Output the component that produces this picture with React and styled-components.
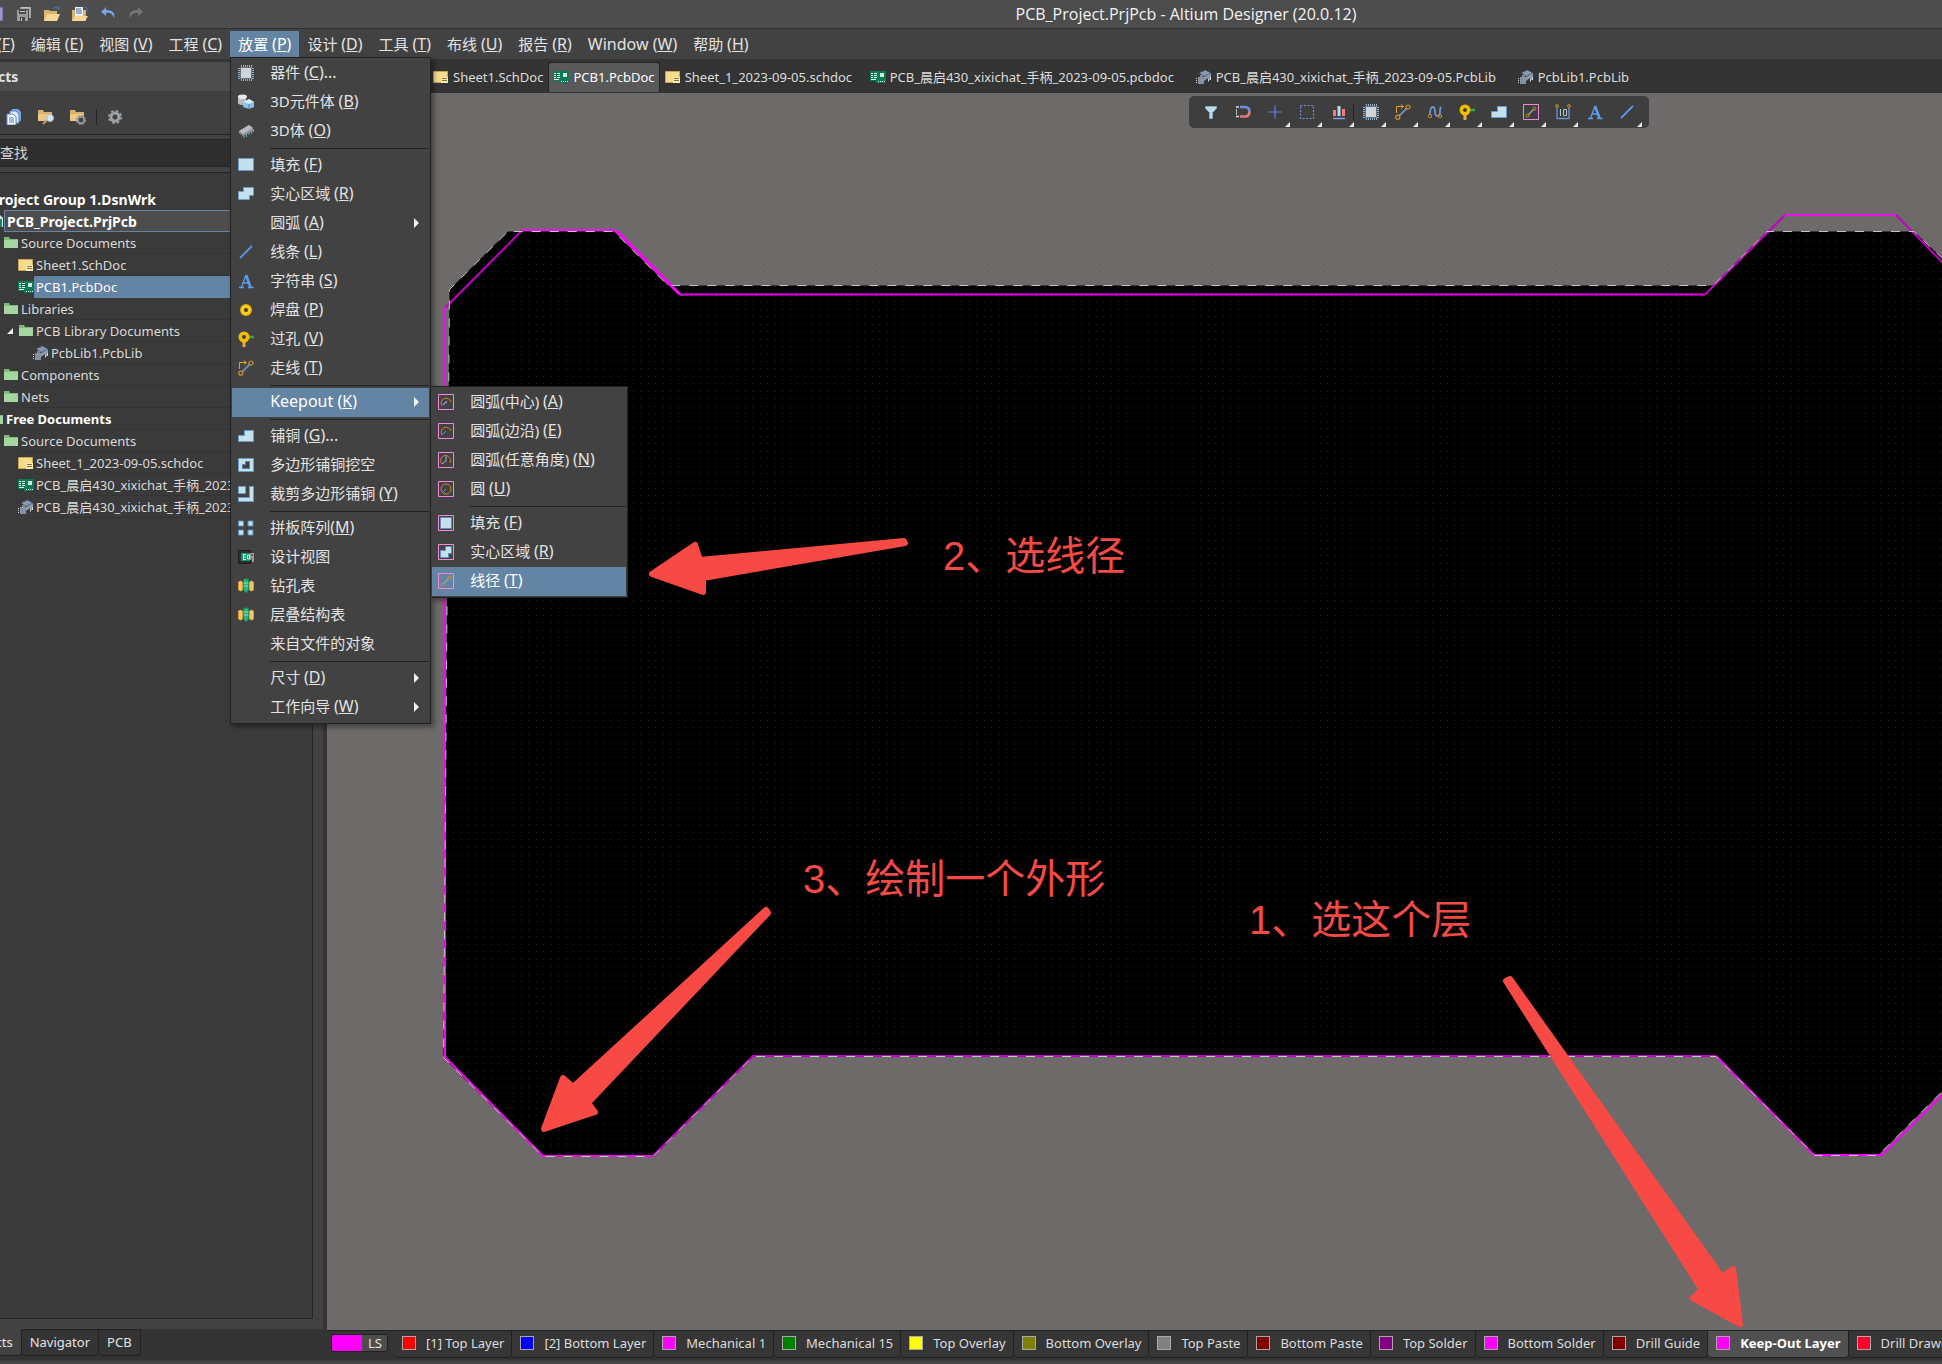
import React, { useState } from "react";
import styled, { createGlobalStyle } from "styled-components";

const GlobalStyle = createGlobalStyle`
  * {
    box-sizing: border-box;
  }
  html, body, #root {
    height: 100%;
  }
  body {
    margin: 0;
    overflow: hidden;
    background: #343434;
    color: #e3e3e3;
    font-family: "Noto Sans", "Noto Sans CJK SC", sans-serif;
    font-size: 13px;
  }
  button, input {
    font: inherit;
    color: inherit;
  }
  button {
    border: none;
    background: none;
    padding: 0;
  }
  ul {
    list-style: none;
    margin: 0;
    padding: 0;
  }
  svg {
    display: block;
    flex: none;
  }
`;

const Window = styled.div`
  display: flex;
  flex-direction: column;
  height: 100vh;
`;

const TitleBar = styled.header`
  display: flex;
  align-items: center;
  height: 29px;
  background: #4d4d4d;
  border-bottom: 1px solid #2f2f2f;
`;

const QuickAccess = styled.div`
  display: flex;
  gap: 12px;
  margin-left: -12px;
`;

const WindowTitle = styled.h1`
  flex: 1;
  margin: 0;
  padding-left: 286px;
  text-align: center;
  font-family: "Open Sans", "Noto Sans", sans-serif;
  font-size: 16px;
  line-height: 20px;
  font-weight: 400;
  color: #f2f2f2;
`;

const MenuBar = styled.nav`
  display: flex;
  align-items: center;
  height: 30px;
  padding-bottom: 1px;
  margin-left: -45px;
  background: #424242;
`;

const MenuSlot = styled.div`
  position: relative;
`;

const MenuTitle = styled.button`
  display: block;
  height: 26px;
  padding: 0 8px;
  font-size: ${(props) => (props.$latin ? "16px" : "15px")};
  line-height: 24px;
  white-space: nowrap;
  background: ${(props) => (props.$open ? "#6484a4" : "none")};
  color: ${(props) => (props.$open ? "#fff" : "#e3e3e3")};
`;

const Hotkey = styled.span`
  font-size: 16px;
`;

const Popup = styled.ul`
  position: absolute;
  z-index: 10;
  top: ${(props) => (props.$sub ? "-2px" : "100%")};
  left: ${(props) => (props.$sub ? "calc(100% + 1px)" : "0")};
  width: ${(props) => (props.$sub ? "198px" : "201px")};
  padding: 1px;
  background: #424242;
  border: 1px solid #222;
  box-shadow: 3px 3px 5px rgba(0, 0, 0, 0.4);
`;

const PopupItem = styled.li`
  position: relative;
`;

const PopupButton = styled.button`
  display: flex;
  align-items: center;
  width: 100%;
  height: 29px;
  padding: 0 10px 0 6px;
  gap: 16px;
  font-size: ${(props) => (props.$latin ? "16px" : "15px")};
  text-align: left;
  white-space: nowrap;
  background: ${(props) => (props.$active ? "#6484a4" : "none")};
  color: ${(props) => (props.$active ? "#fff" : "#e3e3e3")};
`;

const PopupLabel = styled.span`
  flex: 1;
  padding-bottom: 2px;
  line-height: 24px;
`;

const Divider = styled.li`
  height: 5px;
  margin-left: 38px;
  border-top: 2px solid transparent;

  &::after {
    content: "";
    display: block;
    height: 1px;
    background: #222;
  }
`;

const Workspace = styled.div`
  display: flex;
  flex: 1;
  min-height: 0;
`;

const Sidebar = styled.aside`
  display: flex;
  flex-direction: column;
  width: 327px;
  padding-top: 3px;
`;

const Panel = styled.section`
  display: flex;
  flex: 1;
  flex-direction: column;
  min-height: 0;
  margin-right: 4px;
  background: #424242;
`;

const PanelTitle = styled.h2`
  height: 29px;
  margin: 0 0 0 -38px;
  background: #4d4d4d;
  font-size: 14px;
  line-height: 29px;
  font-weight: 700;
`;

const PanelTools = styled.div`
  display: flex;
  align-items: center;
  height: 44px;
  padding: 8px 6px 0;
  gap: 16px;
  background: #404040;
  border-bottom: 1px solid #252525;
`;

const ToolDivider = styled.span`
  width: 1px;
  height: 16px;
  margin: 0 -6px;
  background: #222;
`;

const SearchBox = styled.input`
  height: 28px;
  margin: 4px 10px 5px 0;
  padding: 0 0 2px;
  background: #2e2e2e;
  border: 1px solid #252525;
  border-left: none;
  border-radius: 0;
  font-size: 14px;

  &::placeholder {
    color: #d6d6d6;
    opacity: 1;
  }
`;

const TreeBox = styled.div`
  flex: 1;
  margin: 0 10px 10px 0;
  padding-top: 15px;
  overflow: hidden;
  background: #3a3a3a;
  border: 1px solid #252525;
  border-left: none;
`;

const Tree = styled.ul`
  margin-left: -12px;
`;

const TreeRow = styled.li`
  position: relative;
  display: flex;
  align-items: center;
  height: 22px;
  padding-left: ${(props) => props.$level * 15}px;
`;

const TreeLabel = styled.button`
  flex: 1;
  height: 22px;
  padding: 0 2px;
  overflow: hidden;
  text-align: left;
  white-space: nowrap;
  font-size: ${(props) => (props.$project ? "14px" : "13px")};
  line-height: 19px;
  font-weight: ${(props) => (props.$bold ? 700 : 400)};
  color: ${(props) => (props.$bold || props.$selected ? "#fff" : "#d9d9d9")};
  background: ${(props) => (props.$selected ? "#6484a4" : props.$current ? "#4d4d4d" : "none")};
  border: 1px solid ${(props) => (props.$current || props.$selected ? "#6484a4" : "transparent")};
  border-width: ${(props) => (props.$current ? "1px" : "1px 0")};
  ${(props) => !props.$project && !props.$selected && "border-bottom-color: #333;"}
`;

const Twisty = styled.span`
  position: absolute;
  left: 19px;
  top: 8px;
  border-left: 6px solid transparent;
  border-bottom: 6px solid #f0f0f0;
`;

const PanelTabs = styled.div`
  display: flex;
  height: 35px;
  margin-left: -44px;
`;

const PanelTab = styled.button`
  height: 27px;
  padding: 0 8px 2px;
  font-size: 13px;
  background: ${(props) => (props.$active ? "#424242" : "#343434")};
  border: 1px solid #222;
  border-left-width: 0;
  border-top-color: ${(props) => (props.$active ? "#424242" : "#222")};
  border-radius: 0 0 4px 4px;
`;

const Editor = styled.main`
  display: flex;
  flex: 1;
  flex-direction: column;
  min-width: 0;
`;

const DocTabs = styled.div`
  display: flex;
  align-items: flex-end;
  height: 34px;
  padding: 0 0 1px 101px;
`;

const DocTab = styled.button`
  display: flex;
  align-items: center;
  height: 30px;
  min-width: ${(props) => props.$width}px;
  padding: 0 4px 2px;
  gap: 4px;
  font-size: 13px;
  white-space: nowrap;
  color: ${(props) => (props.$active ? "#fff" : "#dcdcdc")};
  background: ${(props) => (props.$active ? "#595959" : "none")};
  border: 1px solid ${(props) => (props.$active ? "#232323" : "transparent")};
  border-bottom: none;
  border-radius: 4px 4px 0 0;
`;

const Canvas = styled.div`
  position: relative;
  flex: 1;
  min-height: 0;
  overflow: hidden;
  background: #6e6a69;
`;

const Board = styled.svg`
  width: 100%;
  height: 100%;
`;

const Note = styled.text`
  fill: #f74a45;
  font-family: "Liberation Sans", "Noto Sans CJK SC", sans-serif;
  font-size: 40px;
  font-weight: 400;
`;

const ActiveBar = styled.div`
  position: absolute;
  top: 3px;
  left: 862px;
  display: flex;
  height: 32px;
  padding: 0 6px;
  background: #3e3e3e;
  border-radius: 5px;
`;

const ActiveTool = styled.button`
  position: relative;
  display: flex;
  align-items: center;
  justify-content: center;
  width: 32px;
  border-right: 1px solid transparent;

  &::before {
    content: "";
    position: absolute;
    right: 0;
    top: 8px;
    display: ${(props) => (props.$split ? "block" : "none")};
    width: 1px;
    height: 16px;
    background: #222;
  }

  &::after {
    content: "";
    position: absolute;
    right: 0;
    bottom: 1px;
    display: ${(props) => (props.$more ? "block" : "none")};
    border-left: 5px solid transparent;
    border-bottom: 5px solid #e8e8e8;
  }
`;

const LayerTabs = styled.div`
  display: flex;
  height: 34px;
  padding-left: 4px;
  border-top: 1px solid #222;
  overflow: hidden;
`;

const LayerSet = styled.button`
  display: flex;
  flex: none;
  height: 18px;
  margin: 3px 6px 0 0;
  border: 1px solid #222;
  border-radius: 3px;
  overflow: hidden;
  background: #4d4d4d;
  font-size: 13px;
  line-height: 16px;
`;

const LayerSetColor = styled.span`
  width: 30px;
  height: 100%;
  margin-right: 1px;
  background: #ff00ff;
`;

const LayerSetName = styled.span`
  width: 24px;
  text-align: center;
`;

const LayerTab = styled.button`
  display: flex;
  align-items: center;
  flex: none;
  height: 27px;
  padding: 0 7px 2px 8px;
  gap: 10px;
  font-size: 13px;
  white-space: nowrap;
  font-weight: ${(props) => (props.$active ? 700 : 400)};
  color: ${(props) => (props.$active ? "#fff" : "#dcdcdc")};
  background: ${(props) => (props.$active ? "#505050" : "#363636")};
  border: 1px solid #222;
  border-width: 0 1px 1px 0;
  border-radius: 0 0 4px 4px;
`;

const Swatch = styled.span`
  width: 14px;
  height: 14px;
  background: ${(props) => props.$color};
  border: 1px solid #a8a8a8;
`;

const StatusStrip = styled.footer`
  height: 4px;
  margin-top: -4px;
  background: #454545;
  border-top: 1px solid #3c3c3c;
`;

const ICONS = {
  save: (
    <path d="M1 1h14v14H1z" fill="#9d9ac8" stroke="#55558a" />
  ),
  saveAll: (
    <>
      <path d="M4 1h11v11h-2V3H4z" fill="#a9a9a9" />
      <path d="M1 4h11v11H1z" fill="#9b9b9b" />
      <path d="M3 4h7v4H3zM4 11h5v4H4z" fill="#4b4b4b" />
      <path d="M4 5h5v1H4zM5 12h1v3H5zM6 1h6v1H6z" fill="#c8c8c8" />
    </>
  ),
  folderOpen: (
    <>
      <path d="M0 4h5l1 1h7v10H0z" fill="#d9b36a" />
      <path d="M3 8h13l-3 7H0z" fill="#f6d694" />
      <path d="M9 3q3-3 6-1M15 0v3h-3" fill="none" stroke="#4577ad" />
    </>
  ),
  folderDoc: (
    <>
      <path d="M0 4h14v11H0z" fill="#d9b36a" />
      <path d="M3 1h8v9H3z" fill="#e8eff8" />
      <path d="M4 3h5M4 5h6M4 7h6" stroke="#4b6ea8" />
      <path d="M3 10h13l-3 5H0z" fill="#f6d694" />
      <path d="M12 1l3 1v3" fill="none" stroke="#4577ad" />
    </>
  ),
  undo: <path d="M6 1L1 6l5 4V7q6-1 8 5 2-8-8-8z" fill="#7ba4e8" />,
  redo: <path d="M10 1l5 5-5 4V7Q4 6 2 12 0 4 10 4z" fill="#777" />,
  docs: (
    <>
      <path d="M6 0h6l3 3v9H6z" fill="#7ea9dc" />
      <path d="M4 2h6l3 3v9H4z" fill="#dbe8f7" stroke="#5d86c2" />
      <path d="M1 5h6l3 3v8H1z" fill="#fff" stroke="#5d86c2" />
      <path d="M3 9h5M3 11h5M3 13h5" stroke="#4577c9" />
    </>
  ),
  folderSearch: (
    <>
      <path d="M0 1h5l1 2h8v9H0z" fill="#d9b36a" />
      <path d="M0 5h13v7H0z" fill="#ecc987" />
      <path d="M9 11l-4 4" stroke="#c79556" strokeWidth="2" />
      <circle cx="12" cy="9" r="3.5" fill="#d5e6f5" stroke="#a6bccf" />
    </>
  ),
  folderGear: (
    <>
      <path d="M0 1h5l1 2h8v9H0z" fill="#d9b36a" />
      <path d="M0 5h13v7H0z" fill="#ecc987" />
      <circle cx="11" cy="11" r="3.3" fill="#404040" stroke="#8f989c" strokeWidth="2" />
      <circle cx="11" cy="11" r="4.6" fill="none" stroke="#8f989c" strokeDasharray="2 1.6" />
    </>
  ),
  gear: (
    <>
      <circle cx="8" cy="8" r="4" fill="none" stroke="#9ba3a7" strokeWidth="3" />
      <circle cx="8" cy="8" r="6.2" fill="none" stroke="#9ba3a7" strokeWidth="1.6" strokeDasharray="2.6 2.27" />
    </>
  ),
  chip: (
    <>
      <path d="M3.5 0v16M5.5 0v16M7.5 0v16M9.5 0v16M11.5 0v16M13.5 0v16M0 3.5h16M0 5.5h16M0 7.5h16M0 9.5h16M0 11.5h16M0 13.5h16" stroke="#8fb3cf" />
      <path d="M2.5 2.5h11v11h-11z" fill="#cfd4d8" stroke="#66727c" />
    </>
  ),
  body3d: (
    <>
      <path d="M0 2.5v7q4 3 8 0v-7z" fill="#b9bcc0" />
      <ellipse cx="4.5" cy="2.8" rx="4.5" ry="2.3" fill="#e8e8ea" />
      <path d="M5 8l6-3 5 3v5l-5 2-6-2z" fill="#8cc0e6" />
      <path d="M5 8l6-3 5 3-5 2z" fill="#d5ecfa" />
      <path d="M11 10v5" stroke="#4f85b0" />
    </>
  ),
  chip3d: (
    <>
      <path d="M1 8l10-6 4 3v3L5 13 1 10z" fill="#8c9094" />
      <path d="M1 8l10-6 4 3-10 6z" fill="#b8bbbe" />
      <path d="M6 12v3M8.5 11v3M11 9v3M13.5 8v3M15.5 6v3" stroke="#6fa5b8" />
    </>
  ),
  fill: <path d="M.5 1.5h15v12H.5z" fill="#c3e1ec" stroke="#6c9cc4" />,
  region: <path d="M5.5 1.5h10v8h-4v4H.5v-8h5z" fill="#c3e1ec" stroke="#6c9cc4" />,
  line: <path d="M2 14L14 2" stroke="#5b97e6" strokeWidth="1.8" />,
  text: (
    <>
      <path d="M1 14.500h5M10 14.500h5.500M3.500 14L8 2M5 10h6" fill="none" stroke="#5b9ef0" strokeWidth="1.3" />
      <path d="M8 2l4.500 12" stroke="#5b9ef0" strokeWidth="2.6" />
    </>
  ),
  pad: (
    <>
      <circle cx="8" cy="8" r="4" fill="none" stroke="#ecb400" strokeWidth="4" />
      <circle cx="8" cy="8" r="3.5" fill="none" stroke="#ffd83a" strokeWidth="1.4" />
    </>
  ),
  via: (
    <>
      <path d="M9 6h7" stroke="#3fa53f" strokeWidth="2.5" />
      <path d="M6 9v7" stroke="#efa750" strokeWidth="3" />
      <circle cx="6" cy="6" r="3.7" fill="#3a3a3a" stroke="#f0bd00" strokeWidth="3.6" />
    </>
  ),
  track: (
    <>
      <path d="M1.5 9V2.5H8M6 .5l2.5 2L6 4.5" fill="none" stroke="#e5a11d" />
      <path d="M4 12l7.5-7.5" stroke="#6e89b0" strokeWidth="2" />
      <circle cx="13" cy="3" r="2" fill="none" stroke="#c9922e" strokeWidth="1.2" />
      <circle cx="2.8" cy="13.2" r="2" fill="none" stroke="#c9922e" strokeWidth="1.2" />
    </>
  ),
  polygon: <path d="M6.5 2.5h9v11H.5v-6h6z" fill="#c3e1ec" stroke="#6c9cc4" />,
  cutout: (
    <>
      <path d="M.5 1.5h15v13H.5z" fill="#c3e1ec" stroke="#6c9cc4" />
      <path d="M7.5 4.5h4v7h-7v-4h3z" fill="#3c4248" stroke="#5d7f9c" />
    </>
  ),
  slice: <path d="M.5.5h7v7h-7zM11.5.5h4v15H.5v-4h11z" fill="#c3e1ec" stroke="#6c9cc4" />,
  array: <path d="M.5 1h5v5h-5zM10 1h5v5h-5zM.5 10h5v5h-5zM10 10h5v5h-5z" fill="#c3e1ec" stroke="#5e8fbd" />,
  designView: (
    <>
      <path d="M.5 1.5h12v13H.5z" fill="#303030" stroke="#000" strokeDasharray="1 1" />
      <path d="M3 4h9v8H3z" fill="#0f9a68" />
      <path d="M5 5.500h3M5 8h3M5 10.500h3M5.500 5v6M9.500 6h2v4h-2z" fill="none" stroke="#d9f3e6" />
      <path d="M12 4h4v9h-2v-2h-2z" fill="#999" />
      <path d="M13 6h2M13 10h1" stroke="#333" />
    </>
  ),
  drill: (
    <>
      <path d="M.5 4q2-2 4 0v8q-2 2-4 0zM11.5 4q2-2 4 0v8q-2 2-4 0z" fill="#f1c568" stroke="#d69a34" />
      <path d="M5.5 1.5q2.5-1.5 5 0V12L8 15l-2.5-3z" fill="#2eb27c" stroke="#10875a" />
      <path d="M5.5 5h5M5.5 8h5" stroke="#8be0bd" />
    </>
  ),
  sch: (
    <>
      <path d="M.5 2.5h14v11H.5z" fill="#f4dc8a" stroke="#c9a552" />
      <path d="M8 8h7v6H8z" fill="#f9ecb9" />
      <path d="M9 9.5h5M9 11.5h5" stroke="#8d7335" />
    </>
  ),
  pcb: (
    <>
      <path d="M0 2h16v10h-1v2H6v-2H0z" fill="#0a7a54" />
      <path d="M1 4.5h2M4 4.5h3M1 6.5h2M4 6.5h3M1 8.5h2M4 8.5h3M1 10.5h5M8 12.5h1M10 12.5h1M12 12.5h1M14 12.5h1" stroke="#dff5ea" />
      <path d="M10 4h4v4h-4z" fill="#cfe9df" />
    </>
  ),
  lib: (
    <>
      <path d="M8 8l7-4v6l-3 2V9L8 12z" fill="#8f9aa8" />
      <path d="M3 4l6-3 6 3-6 4z" fill="#5f7690" />
      <path d="M5 3l5 3M8 2l5 3M5 5l6-3M7 6l6-3" stroke="#a8b8c8" strokeWidth="0.7" />
      <path d="M2 8h6v7H2z" fill="#8491a3" />
      <path d="M0 9.500h1M0 11.500h1M0 13.500h1M4 7h3M12.500 10v2.500M14.500 8v3" stroke="#d3d9e0" />
    </>
  ),
  folder: (
    <>
      <path d="M1 2h5l1 2h8v9H1z" fill="#7fba7c" />
      <path d="M1 5h14v8H1z" fill="#a5d6a0" />
    </>
  ),
  project: (
    <>
      <path d="M5 2h7l3 3v9H5z" fill="#e6ecf2" />
      <path d="M8 6h6v8H8z" fill="#0a8a5e" />
    </>
  ),
  filter: <path d="M2.5 2.5h11v2l-4 4v6h-3v-6l-4-4z" fill="#b8dcec" stroke="#7fa9c4" />,
  magnet: (
    <>
      <path d="M5 3h5q4.5 0 4.5 5" fill="none" stroke="#6f8ede" strokeWidth="2.6" />
      <path d="M14.5 7.5q0 5-4.5 5H5" fill="none" stroke="#e3787d" strokeWidth="2.6" />
      <path d="M1 3h3M1 12.5h3M1 6h1M1 8h1M1 10h1" stroke="#d9dde6" strokeWidth="1.5" />
    </>
  ),
  cross: <path d="M8 1.5v13M1.5 8h13" stroke="#5d84dc" strokeWidth="1.2" />,
  select: <path d="M1.5 1.5h13v13h-13z" fill="none" stroke="#6f8ede" strokeWidth="1.2" strokeDasharray="2 1.5" />,
  align: (
    <>
      <path d="M2 14.5h12" stroke="#7fa2e8" strokeWidth="1.5" />
      <path d="M2 6h3v6H2zM11 5h3v7h-3z" fill="#ef7d80" />
      <path d="M6.500 2h3v10h-3z" fill="#b8dcec" />
    </>
  ),
  tune: (
    <>
      <path d="M3 11Q3 3 5.5 3T8 7.5 10.5 12 13 8t1-5" fill="none" stroke="#6f91cf" strokeWidth="1.8" />
      <circle cx="3" cy="12" r="1.7" fill="none" stroke="#c9922e" />
      <circle cx="13" cy="12" r="1.7" fill="none" stroke="#c9922e" />
    </>
  ),
  dimension: (
    <>
      <path d="M2 3v11.5h12V3" fill="none" stroke="#6f91cf" strokeWidth="1.3" />
      <circle cx="2" cy="2" r="1.4" fill="none" stroke="#c9922e" />
      <circle cx="14" cy="2" r="1.4" fill="none" stroke="#c9922e" />
      <path d="M5.500 5v7M8.500 5.500h3v6h-3z" fill="none" stroke="#b9c3d3" />
    </>
  ),
};

// keepout variants share the pink frame
const FRAMED = {
  koCenter: (
    <>
      <path d="M4 12A5 5 0 1 1 13 8" fill="none" stroke="#c9822e" />
      <path d="M5 11l3-3" stroke="#6f91cf" strokeWidth="1.4" />
      <path d="M7.5 7.5h1.5v1.5H7.5z" fill="#8bb3ec" />
    </>
  ),
  koEdge: (
    <>
      <path d="M4 12A5 5 0 1 1 13 8" fill="none" stroke="#c9822e" />
      <path d="M4 12l4-4" stroke="#6f91cf" />
    </>
  ),
  koAngle: (
    <>
      <path d="M4 12A5 5 0 1 1 12 11" fill="none" stroke="#c9822e" />
      <path d="M4 12l4-3V4" fill="none" stroke="#8bb3ec" />
    </>
  ),
  koCircle: (
    <>
      <circle cx="8" cy="8" r="5" fill="none" stroke="#c9822e" />
      <path d="M5 11l3-3" stroke="#6f91cf" />
    </>
  ),
  koFill: <path d="M2.5 2.5h11v11h-11z" fill="#c3e1ec" stroke="#5e8fbd" />,
  koRegion: <path d="M7.5 2.5h6v7h-3v4h-8v-7h5z" fill="#c3e1ec" stroke="#5e8fbd" />,
  koTrack: (
    <>
      <path d="M5.5 10.5l5-5" stroke="#8f9fb4" strokeWidth="1.5" />
      <circle cx="11.5" cy="4.5" r="1.5" fill="none" stroke="#c9922e" />
      <circle cx="4.5" cy="11.5" r="1.5" fill="none" stroke="#c9922e" />
    </>
  ),
};

const Icon = ({ name }) => (
  <svg width="16" height="16" viewBox="0 0 16 16" aria-hidden="true">
    {FRAMED[name] && <path d="M.5.5h15v15H.5z" fill="none" stroke="#f08ad8" />}
    {FRAMED[name] || ICONS[name]}
  </svg>
);

const menus = [
  ["文件", "F"],
  ["编辑", "E"],
  ["视图", "V"],
  ["工程", "C"],
  ["放置", "P"],
  ["设计", "D"],
  ["工具", "T"],
  ["布线", "U"],
  ["报告", "R"],
  ["Window", "W", true],
  ["帮助", "H"],
];

const keepoutItems = [
  { label: "圆弧(中心) ", hotkey: "A", icon: "koCenter" },
  { label: "圆弧(边沿) ", hotkey: "E", icon: "koEdge" },
  { label: "圆弧(任意角度) ", hotkey: "N", icon: "koAngle" },
  { label: "圆 ", hotkey: "U", icon: "koCircle" },
  null,
  { label: "填充 ", hotkey: "F", icon: "koFill" },
  { label: "实心区域 ", hotkey: "R", icon: "koRegion" },
  { label: "线径 ", hotkey: "T", icon: "koTrack", active: true },
];

const placeItems = [
  { label: "器件 ", hotkey: "C", icon: "chip", tail: "..." },
  { label: "3D元件体 ", hotkey: "B", icon: "body3d" },
  { label: "3D体 ", hotkey: "O", icon: "chip3d" },
  null,
  { label: "填充 ", hotkey: "F", icon: "fill" },
  { label: "实心区域 ", hotkey: "R", icon: "region" },
  { label: "圆弧 ", hotkey: "A", arrow: true },
  { label: "线条 ", hotkey: "L", icon: "line" },
  { label: "字符串 ", hotkey: "S", icon: "text" },
  { label: "焊盘 ", hotkey: "P", icon: "pad" },
  { label: "过孔 ", hotkey: "V", icon: "via" },
  { label: "走线 ", hotkey: "T", icon: "track" },
  null,
  { label: "Keepout ", hotkey: "K", latin: true, arrow: true, active: true, items: keepoutItems },
  null,
  { label: "铺铜 ", hotkey: "G", icon: "polygon", tail: "..." },
  { label: "多边形铺铜挖空", icon: "cutout" },
  { label: "裁剪多边形铺铜 ", hotkey: "Y", icon: "slice" },
  null,
  { label: "拼板阵列", hotkey: "M", icon: "array" },
  { label: "设计视图", icon: "designView" },
  { label: "钻孔表", icon: "drill" },
  { label: "层叠结构表", icon: "drill" },
  { label: "来自文件的对象" },
  null,
  { label: "尺寸 ", hotkey: "D", arrow: true },
  { label: "工作向导 ", hotkey: "W", arrow: true },
];

const treeRows = [
  { label: "Source Documents", level: 1, icon: "folder" },
  { label: "Sheet1.SchDoc", level: 2, icon: "sch" },
  { label: "PCB1.PcbDoc", level: 2, icon: "pcb", selected: true },
  { label: "Libraries", level: 1, icon: "folder" },
  { label: "PCB Library Documents", level: 2, icon: "folder", twisty: true },
  { label: "PcbLib1.PcbLib", level: 3, icon: "lib" },
  { label: "Components", level: 1, icon: "folder" },
  { label: "Nets", level: 1, icon: "folder" },
  { label: "Free Documents", level: 0, icon: "folder", bold: true },
  { label: "Source Documents", level: 1, icon: "folder" },
  { label: "Sheet_1_2023-09-05.schdoc", level: 2, icon: "sch" },
  { label: "PCB_晨启430_xixichat_手柄_2023-09-05.pcbdoc", level: 2, icon: "pcb" },
  { label: "PCB_晨启430_xixichat_手柄_2023-09-05.PcbLib", level: 2, icon: "lib" },
];

const docTabs = [
  { label: "Sheet1.SchDoc", icon: "sch", width: 120 },
  { label: "PCB1.PcbDoc", icon: "pcb", width: 111 },
  { label: "Sheet_1_2023-09-05.schdoc", icon: "sch", width: 205 },
  { label: "PCB_晨启430_xixichat_手柄_2023-09-05.pcbdoc", icon: "pcb", width: 326 },
  { label: "PCB_晨启430_xixichat_手柄_2023-09-05.PcbLib", icon: "lib", width: 322 },
  { label: "PcbLib1.PcbLib", icon: "lib", width: 120 },
];

const layers = [
  ["[1] Top Layer", "#ff0000"],
  ["[2] Bottom Layer", "#0000ff"],
  ["Mechanical 1", "#ff00ff"],
  ["Mechanical 15", "#008000"],
  ["Top Overlay", "#ffff00"],
  ["Bottom Overlay", "#808000"],
  ["Top Paste", "#808080"],
  ["Bottom Paste", "#800000"],
  ["Top Solder", "#800080"],
  ["Bottom Solder", "#ff00ff"],
  ["Drill Guide", "#800000"],
  ["Keep-Out Layer", "#ff00ff"],
  ["Drill Drawing", "#ff002a"],
];

const tools = [
  ["filter", "Filter"],
  ["magnet", "Snapping"],
  ["cross", "Move", true],
  ["select", "Select", true],
  ["align", "Align", true],
  ["chip", "Component", true],
  ["track", "Route", true],
  ["tune", "Tuning", true],
  ["via", "Via", true],
  ["polygon", "Polygon", true],
  ["koTrack", "Keepout", true],
  ["dimension", "Dimension", true],
  ["text", "String"],
  ["line", "Line", true],
];

const quickTools = [
  ["save", "Save"],
  ["saveAll", "Save all"],
  ["folderOpen", "Open"],
  ["folderDoc", "Open document"],
  ["undo", "Undo"],
  ["redo", "Redo"],
];

// snap grid, one dot per pixel-aligned grid point
const GRID_STEP = 7.47;
const gridPath = (() => {
  let d = "";
  for (let row = 0; row < 124; row++) {
    const y = 234 + Math.round(row * GRID_STEP);
    for (let col = 0; col < 201; col++) {
      d += `M${446 + Math.round(col * GRID_STEP)} ${y}h1v1h-1z`;
    }
  }
  return d;
})();

const BOARD_EDGE =
  "M1943 259L1914 231.5H1767L1713 285.5H668L614 231.5H508L449.5 289.5L443.5 1057.5L543 1156.5H653L753 1056.5H1716L1815 1155.5H1878L1943 1090.5";

const PopupMenu = ({ items, sub }) => (
  <Popup $sub={sub} role="menu">
    {items.map((item, index) =>
      item ? (
        <PopupItem key={item.label} role="none">
          <PopupButton $active={item.active} $latin={item.latin} role="menuitem">
            <Icon name={item.icon} />
            <PopupLabel>
              {item.label}
              {item.hotkey && (
                <Hotkey>
                  (<u>{item.hotkey}</u>){item.tail}
                </Hotkey>
              )}
            </PopupLabel>
            {item.arrow && (
              <svg width="5" height="10" viewBox="0 0 5 10" aria-hidden="true">
                <path d="M0 0l5 5-5 5z" fill="#f0f0f0" />
              </svg>
            )}
          </PopupButton>
          {item.items && item.active && <PopupMenu items={item.items} sub />}
        </PopupItem>
      ) : (
        <Divider key={index} role="separator" />
      )
    )}
  </Popup>
);

const BoardView = () => (
  <Board viewBox="327 93 1615 1237" preserveAspectRatio="xMinYMin slice">
    <path d={BOARD_EDGE} fill="#000" />
    <path d={gridPath} fill="#8a8a8a" fillOpacity="0.3" shapeRendering="crispEdges" />
    <g fill="none" stroke="#ff00ff" strokeWidth="2">
      <path d="M616 230.5L680 294.5" strokeWidth="3" />
      <path d="M445 308L522 230.5M1705 294.5L1785 215" stroke="#c400c4" />
      <path d="M522 230H616M1785 215H1896" stroke="#f010f0" />
      <path d="M1896 215L1943 263" stroke="#c400c4" />
      <path d="M680 294.5H1705" stroke="#8a008a" strokeWidth="3" />
      <path d="M680 294.5H1705" strokeWidth="1" strokeDasharray="3 2" />
      <path d="M445 307V1057L543 1156H653" />
      <path d="M653 1156L753 1056H1716" stroke="#c400c4" />
      <path d="M1716 1056L1814 1155H1882L1943 1094" />
    </g>
    <path d={BOARD_EDGE} fill="none" stroke="#c4c4c4" strokeDasharray="9 9" />
    <g fill="#f74a45" stroke="#f74a45" strokeWidth="6" strokeLinejoin="round">
      <path d="M904 541L905 543L703 578L703 592L652 574L695 545L700 560Z" />
      <path d="M766 910L768 913L588 1103L595 1112L544 1129L563 1078L573 1087Z" />
      <path d="M1510 979L1506 981L1702 1290L1693 1298L1740 1324L1733 1269L1722 1277Z" />
    </g>
    <Note x="943" y="570">2、选线径</Note>
    <Note x="803" y="893">3、绘制一个外形</Note>
    <Note x="1249" y="934">1、选这个层</Note>
  </Board>
);

const App = () => {
  const [openMenu, setOpenMenu] = useState("放置");
  const [activeDoc, setActiveDoc] = useState("PCB1.PcbDoc");
  const [activeLayer, setActiveLayer] = useState("Keep-Out Layer");

  return (
    <Window>
      <GlobalStyle />
      <TitleBar>
        <QuickAccess>
          {quickTools.map(([icon, label]) => (
            <button key={icon} aria-label={label}>
              <Icon name={icon} />
            </button>
          ))}
        </QuickAccess>
        <WindowTitle>PCB_Project.PrjPcb - Altium Designer (20.0.12)</WindowTitle>
      </TitleBar>

      <MenuBar>
        {menus.map(([label, hotkey, latin]) => (
          <MenuSlot key={label}>
            <MenuTitle $open={openMenu === label} $latin={latin} onClick={() => setOpenMenu(label)}>
              {label} <Hotkey>(<u>{hotkey}</u>)</Hotkey>
            </MenuTitle>
            {label === "放置" && openMenu === label && <PopupMenu items={placeItems} />}
          </MenuSlot>
        ))}
      </MenuBar>

      <Workspace>
        <Sidebar>
          <Panel>
            <PanelTitle>Projects</PanelTitle>
            <PanelTools>
              <button aria-label="Documents"><Icon name="docs" /></button>
              <button aria-label="Explore"><Icon name="folderSearch" /></button>
              <button aria-label="Project options"><Icon name="folderGear" /></button>
              <ToolDivider />
              <button aria-label="Settings"><Icon name="gear" /></button>
            </PanelTools>
            <SearchBox type="text" placeholder="查找" aria-label="查找" />
            <TreeBox>
              <Tree>
                <TreeRow $level={0}>
                  <TreeLabel $bold $project>Project Group 1.DsnWrk</TreeLabel>
                </TreeRow>
                <TreeRow $level={0}>
                  <Icon name="project" />
                  <TreeLabel $bold $project $current>PCB_Project.PrjPcb</TreeLabel>
                </TreeRow>
                {treeRows.map((row, index) => (
                  <TreeRow key={index} $level={row.level}>
                    {row.twisty && <Twisty />}
                    <Icon name={row.icon} />
                    <TreeLabel $bold={row.bold} $selected={row.selected}>{row.label}</TreeLabel>
                  </TreeRow>
                ))}
              </Tree>
            </TreeBox>
          </Panel>
          <PanelTabs>
            <PanelTab $active>Projects</PanelTab>
            <PanelTab>Navigator</PanelTab>
            <PanelTab>PCB</PanelTab>
          </PanelTabs>
        </Sidebar>

        <Editor>
          <DocTabs>
            {docTabs.map((tab) => (
              <DocTab
                key={tab.label}
                $active={activeDoc === tab.label}
                $width={tab.width}
                onClick={() => setActiveDoc(tab.label)}
              >
                <Icon name={tab.icon} />
                {tab.label}
              </DocTab>
            ))}
          </DocTabs>
          <Canvas>
            <BoardView />
            <ActiveBar>
              {tools.map(([icon, label, more]) => (
                <ActiveTool key={label} $more={more} $split={icon === "align"} aria-label={label}>
                  <Icon name={icon} />
                </ActiveTool>
              ))}
            </ActiveBar>
          </Canvas>
          <LayerTabs>
            <LayerSet>
              <LayerSetColor />
              <LayerSetName>LS</LayerSetName>
            </LayerSet>
            {layers.map(([label, color]) => (
              <LayerTab key={label} $active={activeLayer === label} onClick={() => setActiveLayer(label)}>
                <Swatch $color={color} />
                {label}
              </LayerTab>
            ))}
          </LayerTabs>
        </Editor>
      </Workspace>
      <StatusStrip />
    </Window>
  );
};

export default App;
